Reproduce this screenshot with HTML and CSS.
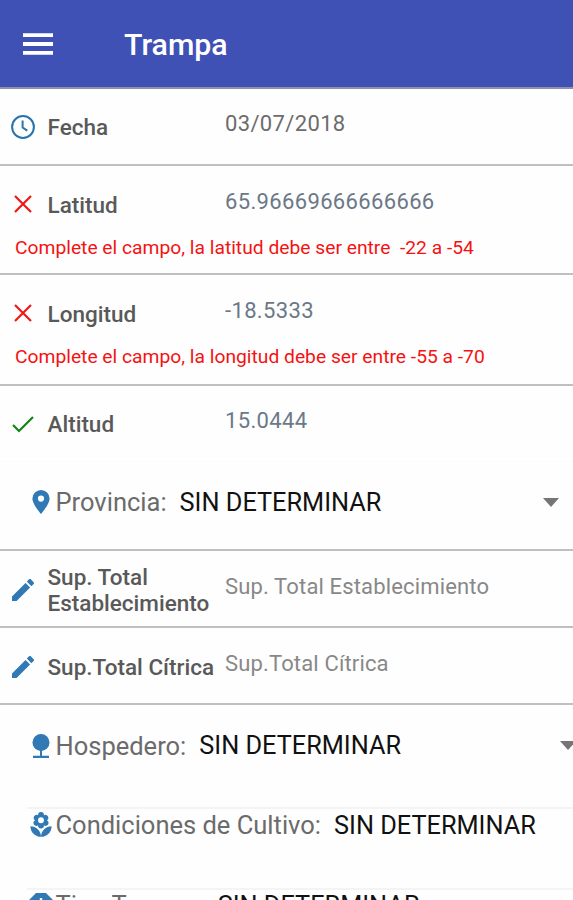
FILE: index.html
```
<!DOCTYPE html>
<html lang="es">
<head>
    <meta charset="UTF-8">
    <meta name="viewport" content="width=device-width, initial-scale=1.0">
    <title>Trampa</title>
    <link rel="stylesheet" href="styles.css">
</head>
<body>

<header class="toolbar">
    <svg class="menu-icon" viewBox="0 0 30 22"><path d="M0 2.2h30M0 11h30M0 19.8h30"/></svg>
    <h1>Trampa</h1>
</header>

<main class="form">
    <!-- Fecha -->
    <div class="field fecha">
        <div class="line">
            <svg class="icon clock" viewBox="0 0 24 24"><circle cx="12" cy="12" r="10.9"/><path d="M11.6 5.5v7l4.7 3.2"/></svg>
            <label>Fecha</label>
            <span class="value date">03/07/2018</span>
        </div>
    </div>

    <!-- Latitud -->
    <div class="field latitud">
        <div class="line">
            <svg class="icon cross" viewBox="0 0 24 24"><path d="M4 4l16 16M20 4L4 20"/></svg>
            <label>Latitud</label>
            <span class="value">65.96669666666666</span>
        </div>
        <p class="error">Complete el campo, la latitud debe ser entre&nbsp; -22 a -54</p>
    </div>

    <!-- Longitud -->
    <div class="field longitud">
        <div class="line">
            <svg class="icon cross" viewBox="0 0 24 24"><path d="M4 4l16 16M20 4L4 20"/></svg>
            <label>Longitud</label>
            <span class="value">-18.5333</span>
        </div>
        <p class="error">Complete el campo, la longitud debe ser entre -55 a -70</p>
    </div>

    <!-- Altitud -->
    <div class="field altitud">
        <div class="line">
            <svg class="icon check" viewBox="0 0 24 24"><path d="M2 13l6 6L22 5"/></svg>
            <label>Altitud</label>
            <span class="value">15.0444</span>
        </div>
    </div>

    <!-- Provincia -->
    <div class="select provincia">
        <svg class="select-icon" viewBox="0 0 26 26"><path fill-rule="evenodd" d="M13 1a8.6 8.6 0 0 0-8.6 8.6C4.4 15.5 13 25 13 25s8.6-9.5 8.6-15.4A8.6 8.6 0 0 0 13 1zm0 5.5a3.1 3.1 0 1 1 0 6.2 3.1 3.1 0 0 1 0-6.2z"/></svg>
        <span class="name">Provincia:</span>
        <span class="option">SIN DETERMINAR</span>
        <span class="arrow"></span>
    </div>

    <!-- Superficies -->
    <div class="field sup">
        <div class="line">
            <svg class="icon pencil" viewBox="3 3 18 18"><path d="M3 17.25V21h3.75L17.81 9.94l-3.75-3.75L3 17.25zM20.71 7.04c.39-.39.39-1.02 0-1.41l-2.34-2.34c-.39-.39-1.02-.39-1.41 0l-1.83 1.83 3.75 3.75 1.83-1.83z"/></svg>
            <label>Sup. Total<br>Establecimiento</label>
            <span class="value placeholder">Sup. Total Establecimiento</span>
        </div>
    </div>
    <div class="field sup">
        <div class="line">
            <svg class="icon pencil" viewBox="3 3 18 18"><path d="M3 17.25V21h3.75L17.81 9.94l-3.75-3.75L3 17.25zM20.71 7.04c.39-.39.39-1.02 0-1.41l-2.34-2.34c-.39-.39-1.02-.39-1.41 0l-1.83 1.83 3.75 3.75 1.83-1.83z"/></svg>
            <label>Sup.Total Cítrica</label>
            <span class="value placeholder">Sup.Total Cítrica</span>
        </div>
    </div>

    <!-- Hospedero -->
    <div class="select hospedero">
        <svg class="select-icon" viewBox="0 0 26 26"><circle cx="13" cy="9.5" r="8.5"/><path d="M12 17h2v5.7h7V25H5v-2.3h7z"/></svg>
        <span class="name">Hospedero:</span>
        <span class="option">SIN DETERMINAR</span>
        <span class="arrow"></span>
    </div>

    <!-- Condiciones -->
    <div class="select inset condiciones">
        <svg class="select-icon" viewBox="1.5 1 21 22"><path fill-rule="evenodd" d="M12 22a9 9 0 0 0 9-9 9 9 0 0 0-9 9zM5.6 10.25a2.5 2.5 0 0 0 3.92 2.06l-.02.19a2.5 2.5 0 0 0 5 0l-.02-.19a2.5 2.5 0 0 0 3.92-2.06c0-1-.59-1.85-1.43-2.25a2.49 2.49 0 0 0-2.49-4.31l.02-.19a2.5 2.5 0 0 0-5 0l.02.19A2.49 2.49 0 0 0 7.03 8a2.49 2.49 0 0 0-1.43 2.25zM12 5.5a2.5 2.5 0 1 1 0 5 2.5 2.5 0 0 1 0-5zM3 13a9 9 0 0 0 9 9 9 9 0 0 0-9-9z"/></svg>
        <span class="name">Condiciones de Cultivo:</span>
        <span class="option">SIN DETERMINAR</span>
    </div>

    <!-- Tipo Trampa -->
    <div class="select inset">
        <svg class="select-icon" viewBox="0 0 26 26"><path fill-rule="evenodd" d="M8 1h10l7 7v10l-7 7H8l-7-7V8zM11.8 6v9h2.4V6zM11.8 18v3h2.4v-3z"/></svg>
        <span class="name">Tipo Trampa:</span>
        <span class="option">SIN DETERMINAR</span>
    </div>
</main>

</body>
</html>
```
FILE: styles.css
```
* {
    box-sizing: border-box;
}
html {
    overflow: hidden;
}
body {
    margin: 0;
    height: 900px;
    overflow: hidden;
    background: #fefefe;
    font-family: Roboto, sans-serif;
    color: #595959;
    display: flex;
    flex-direction: column;
}
.toolbar {
    flex: none;
    height: 89px;
    padding: 1px 23px 0;
    display: flex;
    align-items: center;
    gap: 71px;
    background: #3f51b5;
    border-bottom: 2px solid #8d91ae;
}
.toolbar h1 {
    margin: 0;
    font-size: 30.3px;
    font-weight: 500;
    color: #fff;
}
.menu-icon {
    width: 30px;
    height: 22px;
    stroke: #fff;
    stroke-width: 3.8;
}
.form {
    flex: 1;
    min-height: 0;
    overflow: hidden;
}
.field {
    border-bottom: 2px solid #bfbfbf;
}
.line {
    display: grid;
    grid-template-columns: 36.5px 177.5px 1fr;
    align-items: center;
    height: 75px;
    padding-left: 11px;
}
.line label {
    font-size: 22.5px;
    font-weight: 500;
    line-height: 26px;
    padding-top: 1px;
    white-space: nowrap;
}
.value {
    font-size: 22px;
    line-height: 26px;
    letter-spacing: 0.35px;
    color: #6b7887;
    padding-bottom: 5px;
    white-space: nowrap;
}
.value.date {
    color: #6c6c6c;
}
.value.placeholder {
    color: #888;
    letter-spacing: 0.15px;
}
.icon {
    width: 24px;
    height: 24px;
    fill: none;
}
.clock {
    stroke: #2874ad;
    stroke-width: 2;
}
.cross {
    stroke: #f21616;
    stroke-width: 2.2;
}
.check {
    stroke: #148514;
    stroke-width: 2.2;
}
.pencil {
    width: 22px;
    height: 22px;
    margin-left: 1px;
    fill: #3179b4;
}
.error {
    margin: 0;
    padding-left: 15px;
    font-size: 19.25px;
    line-height: 11px;
    color: #f51212;
    white-space: nowrap;
}
.latitud {
    height: 109px;
}
.latitud .line,
.longitud .line {
    height: 76px;
}
.longitud {
    height: 111px;
}
.altitud {
    height: 76px;
    border-bottom: 1px solid #fbfbfb;
}
.sup {
    height: 77px;
}
.sup .line {
    height: 77px;
}
.select {
    display: flex;
    align-items: center;
    padding-left: 28px;
    font-size: 25.5px;
    white-space: nowrap;
}
.select-icon {
    flex: none;
    width: 26px;
    height: 26px;
    fill: #3179b4;
}
.name {
    margin-left: 1.5px;
    color: #6b6b6b;
}
.option {
    margin-left: 13px;
    font-size: 25.3px;
    color: #111;
}
.arrow {
    margin-left: auto;
    border: 8px solid transparent;
    border-top: 9px solid #757575;
    border-bottom: none;
}
.provincia {
    height: 89px;
    padding-right: 14px;
    padding-bottom: 7px;
    border-bottom: 2px solid #bfbfbf;
}
.hospedero {
    height: 102px;
    padding-bottom: 21px;
    margin-right: -3px;
}
.inset {
    margin-left: 27px;
    padding-left: 1px;
    height: 81px;
    padding-bottom: 49px;
    border-top: 2px solid #f4f4f4;
}
.condiciones {
    padding-bottom: 47px;
}
```
